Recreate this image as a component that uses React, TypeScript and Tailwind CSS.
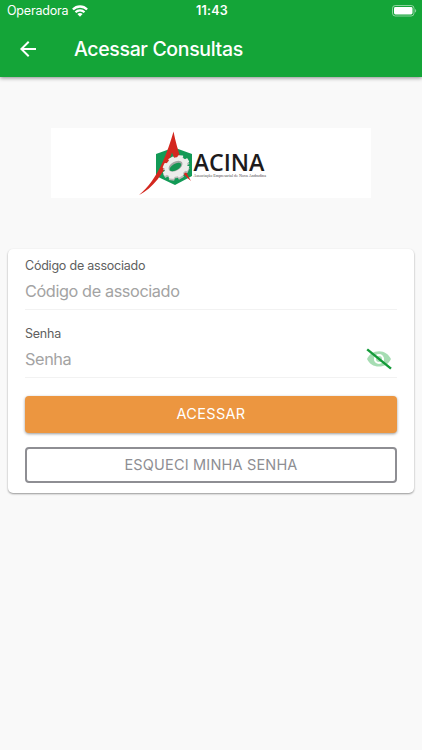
import type { ReactNode } from 'react';

function WifiIcon() {
  return (
    <svg className="w-4 h-3" viewBox="0 0 16 12" fill="none" stroke="#fff">
      <path d="M.9 4.5C4.8.5 11.2.5 15.1 4.5" strokeWidth="2.3" />
      <path d="M3.5 7.2C6 4.7 10 4.7 12.5 7.2" strokeWidth="2.2" />
      <path d="M8 11.8 5.4 9.1C6.9 7.7 9.1 7.7 10.6 9.1Z" fill="#fff" stroke="none" />
    </svg>
  );
}

function BatteryIcon() {
  return (
    <svg className="w-[25px] h-3" viewBox="0 0 25 12" fill="none">
      <rect x=".5" y=".5" width="21.5" height="10.5" rx="2.8" stroke="#fff" strokeOpacity=".5" />
      <rect x="2" y="2" width="18.5" height="7.5" rx="1.4" fill="#fff" />
      <path d="M23.2 4v3.6c1.3-.5 1.3-3.1 0-3.6Z" fill="#fff" fillOpacity=".6" />
    </svg>
  );
}

function BackIcon() {
  return (
    <svg className="w-6 h-6" viewBox="0 0 24 24" fill="#fff">
      <path d="M20 11H7.83l5.59-5.59L12 4l-8 8 8 8 1.41-1.41L7.83 13H20v-2z" />
    </svg>
  );
}

function EyeOffIcon() {
  return (
    <svg className="mr-1 w-[28px] h-[22px] shrink-0" viewBox="0 0 28 22" fill="none">
      <path
        fillRule="evenodd"
        d="M14 3.2C8.6 3.2 4 6.5 2 11c2 4.5 6.6 7.6 12 7.6S24 15.5 26 11C24 6.5 19.4 3.2 14 3.2Zm0 2.7a5 5 0 1 1 0 10.2 5 5 0 0 1 0-10.200Z"
        fill="#14a538"
        fillOpacity=".38"
      />
      <circle cx="14" cy="11" r="3" fill="#14a538" fillOpacity=".38" />
      <path d="M2.2 1.4 26 20.6" stroke="#129a38" strokeWidth="2.4" />
    </svg>
  );
}

const GEAR_TEETH = [0, 45, 90, 135, 180, 225, 270, 315];

function Logo() {
  return (
    <svg className="w-[320px] h-[70px]" viewBox="51 128 320 70">
      <path d="M174 147.500 192 154v22l-17 9-19-9v-22Z" fill="#129a56" />
      <path
        d="M173.500 131.500C168 151 158 180 139 195c13-6 26-22 33-42.500 4 10 9 21 19 28.500-8-14-13.500-30-17.500-49.500Z"
        fill="#d3281f"
      />
      <g transform="translate(176 167) rotate(-30) scale(1 .76)">
        <g fill="#b9bab8" transform="translate(-.8 2.400)">
          <circle r="11.600" />
          {GEAR_TEETH.map((angle) => (
            <rect key={angle} x="-3" y="-14" width="6" height="6" transform={`rotate(${angle})`} />
          ))}
        </g>
        <g fill="#ededeb">
          <circle r="12" />
          {GEAR_TEETH.map((angle) => (
            <rect key={angle} x="-3" y="-14.200" width="6" height="6" rx="1" transform={`rotate(${angle})`} />
          ))}
        </g>
        <ellipse cy="-1.300" rx="7.600" ry="6" fill="#a3a8a4" />
        <ellipse cx="-.5" cy="-.3" rx="6.400" ry="4.200" fill="#169553" />
      </g>
      <text
        x="193.500"
        y="171.300"
        textLength="71"
        lengthAdjust="spacingAndGlyphs"
        fontSize="23"
        fontWeight="600"
        fill="#1d1b1c"
        className="font-['Open_Sans',sans-serif]"
      >
        ACINA
      </text>
      <text
        x="193.500"
        y="177"
        textLength="72.500"
        lengthAdjust="spacingAndGlyphs"
        fontSize="5"
        fill="#4b4849"
        className="font-['Liberation_Serif',serif]"
      >
        Associação Empresarial de Nova Andradina
      </text>
    </svg>
  );
}

type FieldProps = {
  id: string;
  label: string;
  type: string;
  children?: ReactNode;
};

function Field({ id, label, type, children }: FieldProps) {
  return (
    <div className="h-[60px] border-b border-[#f2f2f2]">
      <label htmlFor={id} className="block h-[29px] pt-2 text-[12.5px] leading-4 tracking-[-0.22px] text-[#606060]">
        {label}
      </label>
      <div className="flex h-6 items-center justify-between">
        <input
          id={id}
          type={type}
          placeholder={label}
          className="w-full text-[16.3px] leading-6 tracking-[-0.4px] outline-none placeholder:text-[#a3a3a3]"
        />
        {children}
      </div>
    </div>
  );
}

export default function App() {
  return (
    <div className="flex h-[750px] w-[422px] flex-col overflow-hidden bg-[#f9f9f9] font-['Inter',sans-serif]">
      <header className="h-[77px] shrink-0 bg-[#14a538] text-white shadow-[0_1px_4px_rgba(0,0,0,0.45)]">
        <div className="grid h-[22px] grid-cols-3 items-center pl-[7px] pr-[5px] text-[12.5px] leading-none">
          <div className="flex items-center gap-1">
            <span className="tracking-[-0.2px]">Operadora</span>
            <WifiIcon />
          </div>
          <span className="pt-px text-center font-semibold tracking-[0.2px]">11:43</span>
          <div className="flex justify-end">
            <BatteryIcon />
          </div>
        </div>
        <div className="flex h-[54px] items-center pl-4">
          <button type="button" aria-label="Voltar">
            <BackIcon />
          </button>
          <h1 className="ml-[34px] text-[19.5px] font-medium leading-6 tracking-[-0.35px]">Acessar Consultas</h1>
        </div>
      </header>

      <main>
        <div className="mx-auto mt-[51px] w-[320px] bg-white">
          <Logo />
        </div>

        <form className="ml-2 mr-2 mt-[51px] h-[244px] rounded-[5px] bg-white px-[17px] pt-px shadow-[0_1px_2px_rgba(0,0,0,0.4)]">
          <Field id="codigo" label="Código de associado" type="text" />
          <div className="mt-2">
            <Field id="senha" label="Senha" type="password">
              <EyeOffIcon />
            </Field>
          </div>
          <button
            type="button"
            className="mt-[18px] block h-[37px] w-full rounded bg-[#ec9640] pb-0.5 text-[14.5px] tracking-[0.3px] text-white shadow-[0_1px_3px_rgba(0,0,0,0.4)]"
          >
            ACESSAR
          </button>
          <button
            type="button"
            className="mt-3.5 block h-9 w-full rounded border-2 border-[#8e8e93] text-[14.5px] tracking-[0.18px] text-[#8e8e93]"
          >
            ESQUECI MINHA SENHA
          </button>
        </form>
      </main>
    </div>
  );
}
